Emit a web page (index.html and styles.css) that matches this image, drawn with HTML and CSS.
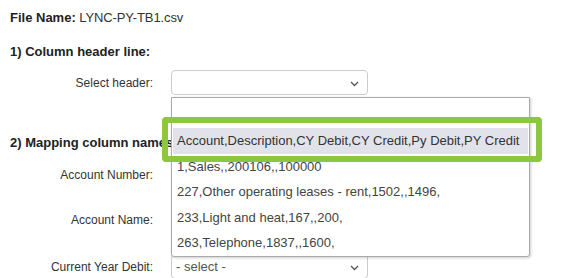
FILE: index.html
```html
<!DOCTYPE html>
<html lang="en">
<head>
  <meta charset="UTF-8">
  <meta name="viewport" content="width=device-width, initial-scale=1.0">
  <title>Import file</title>
  <link rel="stylesheet" href="styles.css">
</head>
<body>
  <div class="file-line"><b>File Name:</b> LYNC-PY-TB1.csv</div>

  <h2 class="section first">1) Column header line:</h2>
  <div class="row row-header">
    <label class="label">Select header:</label>
    <div class="select open">
      <span class="value"></span>
      <svg class="chevron" width="9" height="6" viewBox="0 0 9 6"><path d="M1 1l3.5 3.5L8 1" fill="none" stroke="#555" stroke-width="1.3"/></svg>

      <div class="dropdown">
        <div class="option"></div>
        <div class="option selected">Account,Description,CY Debit,CY Credit,Py Debit,PY Credit</div>
        <div class="option">1,Sales,,200106,,100000</div>
        <div class="option">227,Other operating leases - rent,1502,,1496,</div>
        <div class="option">233,Light and heat,167,,200,</div>
        <div class="option">263,Telephone,1837,,1600,</div>
        <div class="highlight-frame"></div>
      </div>
    </div>
  </div>

  <h2 class="section second">2) Mapping column names</h2>
  <div class="row row-number">
    <label class="label">Account Number:</label>
    <div class="select"></div>
  </div>
  <div class="row row-name">
    <label class="label">Account Name:</label>
    <div class="select"></div>
  </div>
  <div class="row row-debit">
    <label class="label">Current Year Debit:</label>
    <div class="select">
      <span class="value">- select -</span>
      <svg class="chevron" width="9" height="6" viewBox="0 0 9 6"><path d="M1 1l3.5 3.5L8 1" fill="none" stroke="#555" stroke-width="1.3"/></svg>
    </div>
  </div>
</body>
</html>
```

FILE: styles.css
```css
body {
  margin: 0;
  padding: 10px;
  font-family: 'Liberation Sans', Arial, sans-serif;
  font-size: 12px;
  color: #333;
  background: #fff;
  overflow: hidden;
}

.file-line {
  font-size: 13px;
  line-height: 16px;
  color: #333;
  letter-spacing: -0.1px;
}

.file-line b {
  color: #222;
  letter-spacing: 0;
}

.section {
  font-size: 13px;
  font-weight: bold;
  line-height: 16px;
  color: #222;
  margin: 0;
}

.section.first {
  margin-top: 18px;
}

.section.second {
  margin-top: 40px;
}

.row {
  display: flex;
  align-items: center;
}

.row-header { margin-top: 10px; }
.row-number { margin-top: 11px; }
.row-name { margin-top: 20px; }
.row-debit { margin-top: 22px; }

.label {
  width: 143px;
  margin-right: 18px;
  text-align: right;
  color: #333;
}

.select {
  position: relative;
  width: 197px;
  height: 25px;
  box-sizing: border-box;
  border: 1px solid #ccc;
  border-radius: 4px;
  display: flex;
  align-items: center;
  padding: 0 4px;
  font-size: 13px;
  color: #555;
}

.chevron {
  position: absolute;
  right: 8px;
  top: 10px;
}

.dropdown {
  position: absolute;
  z-index: 10;
  top: 26px;
  left: -1px;
  width: 359px;
  height: 160px;
  box-sizing: border-box;
  padding-top: 5px;
  background: #fff;
  border: 1px solid #aaa;
  border-radius: 0 0 3px 3px;
  box-shadow: 1px 1px 3px rgba(0, 0, 0, 0.2);
}

.option {
  height: 25.4px;
  line-height: 25.4px;
  padding: 0 5px;
  font-size: 13px;
  color: #444;
  white-space: nowrap;
}

.option.selected {
  margin: 0 1px;
  padding: 0 4px;
  background: #e2e2ea;
  color: #333;
}

.highlight-frame {
  position: absolute;
  left: -10px;
  top: 19px;
  width: 380px;
  height: 45px;
  box-sizing: border-box;
  border: 6px solid #8dc63f;
  border-radius: 4px;
}
```
